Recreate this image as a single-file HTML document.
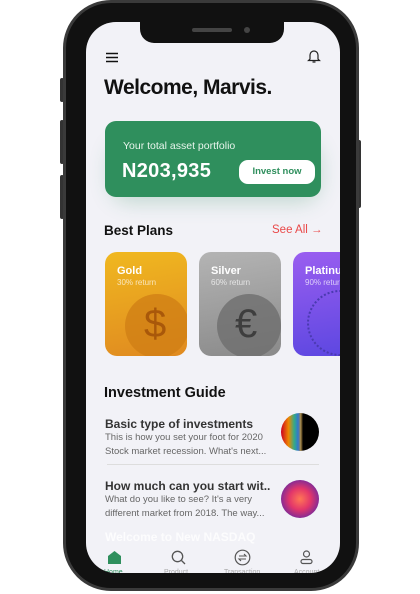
<!DOCTYPE html>
<html><head><style>
*{margin:0;padding:0;box-sizing:border-box}
body{width:420px;height:594px;background:#fff;position:relative;overflow:hidden;font-family:"Liberation Sans",sans-serif}
.a{position:absolute}
.frame{left:63px;top:0;width:296px;height:591px;border-radius:48px;background:#111;border:3px solid #3a3a3a}
.btn{background:#333;border-radius:2px}
.screen{left:86px;top:22px;width:254px;height:551px;border-radius:30px;background:#f2f2f7;overflow:hidden}
.notch{left:140px;top:18px;width:144px;height:25px;background:#111;border-radius:0 0 14px 14px}
.card{border-radius:12px;overflow:hidden}
.t{color:#fff;font-weight:bold;font-size:11px}
.s{color:rgba(255,255,255,.7);font-size:8px}
.h{font-weight:bold;font-size:12px;color:#333;white-space:nowrap}
.d{font-size:9.5px;color:#666;line-height:14px;white-space:nowrap}
.lab{font-size:7px;color:#aaa}
</style></head><body>
<div class="a btn" style="left:60px;top:78px;width:4px;height:24px"></div>
<div class="a btn" style="left:60px;top:120px;width:4px;height:44px"></div>
<div class="a btn" style="left:60px;top:175px;width:4px;height:44px"></div>
<div class="a btn" style="left:357px;top:140px;width:4px;height:68px"></div>
<div class="a frame"></div>
<div class="a screen">
 <svg class="a" style="left:20px;top:30px" width="13" height="11"><path d="M0 1.5H12M0 5.5H12M0 9.5H12" stroke="#111" stroke-width="1.5"/></svg>
 <svg class="a" style="left:221px;top:27px" width="14" height="15"><path d="M3 10V6a4 4 0 0 1 8 0v4l1.5 1.5h-11z M5.5 13h3" fill="none" stroke="#222" stroke-width="1.2"/></svg>
 <div class="a" style="left:18px;top:54px;font-size:21px;font-weight:bold;color:#111;letter-spacing:-.5px">Welcome, Marvis.</div>
 <div class="a" style="left:24px;top:108px;width:210px;height:60px;border-radius:20px;box-shadow:0 12px 20px rgba(46,140,90,.25)"></div>
 <div class="a" style="left:19px;top:99px;width:216px;height:76px;border-radius:11px;background:#2f8f5d"></div>
 <div class="a" style="left:37px;top:118px;font-size:10.5px;color:#e8f5ec">Your total asset portfolio</div>
 <div class="a" style="left:36px;top:138px;font-size:20px;color:#fff;font-weight:bold;letter-spacing:.3px">N203,935</div>
 <div class="a" style="left:153px;top:138px;width:76px;height:24px;border-radius:9px;background:#fff;color:#2f8f5d;font-size:9.5px;font-weight:bold;text-align:center;line-height:24px">Invest now</div>
 <div class="a" style="left:18px;top:201px;font-size:13.5px;font-weight:bold;color:#111">Best Plans</div>
 <div class="a" style="left:186px;top:202px;font-size:11.5px;color:#e94848">See All →</div>
 <div class="a card" style="left:19px;top:230px;width:82px;height:104px;background:linear-gradient(170deg,#f0b820,#e08a20)">
  <div class="a" style="left:20px;top:42px;width:64px;height:64px;border-radius:50%;background:#cf7d14;opacity:.75"></div>
  <div class="a" style="left:39px;top:50px;font-size:40px;color:#a9580a">$</div>
  <div class="a t" style="left:12px;top:13px">Gold</div><div class="a s" style="left:12px;top:26px">30% return</div>
 </div>
 <div class="a card" style="left:113px;top:230px;width:82px;height:104px;background:linear-gradient(170deg,#b4b4b4,#8a8a8a)">
  <div class="a" style="left:18px;top:42px;width:64px;height:64px;border-radius:50%;background:#6e6e6e;opacity:.8"></div>
  <div class="a" style="left:36px;top:50px;font-size:40px;color:#3e3e3e">€</div>
  <div class="a t" style="left:12px;top:13px">Silver</div><div class="a s" style="left:12px;top:26px">60% return</div>
 </div>
 <div class="a card" style="left:207px;top:230px;width:82px;height:104px;background:linear-gradient(170deg,#9a5ef0,#5a46e0)">
  <div class="a" style="left:14px;top:38px;width:66px;height:66px;border-radius:50%;border:2px dotted #4a3ab0"></div>
  <div class="a t" style="left:12px;top:13px">Platinum</div><div class="a s" style="left:12px;top:26px">90% return</div>
 </div>
 <div class="a" style="left:18px;top:363px;font-size:14.5px;font-weight:bold;color:#111">Investment Guide</div>
 <div class="a h" style="left:19px;top:395px">Basic type of investments</div>
 <div class="a d" style="left:19px;top:409px">This is how you set your foot for 2020<br>Stock market recession. What's next...</div>
 <div class="a" style="left:195px;top:391px;width:38px;height:38px;border-radius:50%;background:linear-gradient(90deg,#c02 0%,#e80 20%,#3a8 35%,#37c 45%,#a84 52%,#000 58%,#000)"></div>
 <div class="a" style="left:21px;top:442px;width:212px;height:1px;background:#ddd"></div>
 <div class="a h" style="left:19px;top:457px">How much can you start wit..</div>
 <div class="a d" style="left:19px;top:471px">What do you like to see? It's a very<br>different market from 2018. The way...</div>
 <div class="a" style="left:195px;top:458px;width:38px;height:38px;border-radius:50%;background:radial-gradient(circle at 50% 50%,#f75 0%,#e3366a 40%,#7a2a9a 75%,#3a4aa0)"></div>
 <div class="a" style="left:19px;top:508px;font-size:12px;font-weight:bold;color:#fff;opacity:.8">Welcome to New NASDAQ</div>
 <svg class="a" style="left:21px;top:528px" width="15" height="15"><path d="M1 6L7.5 1 14 6V14H1Z" fill="#2f8f5d"/></svg>
 <svg class="a" style="left:85px;top:528px" width="15" height="15"><circle cx="6.5" cy="6.5" r="5.2" fill="none" stroke="#555" stroke-width="1.3"/><path d="M10.5 10.5L14 14" stroke="#555" stroke-width="1.3"/></svg>
 <svg class="a" style="left:148px;top:527px" width="17" height="17"><circle cx="8.5" cy="8.5" r="7.3" fill="none" stroke="#555" stroke-width="1.2"/><path d="M5 7H12L10 5M12 10H5L7 12" fill="none" stroke="#555" stroke-width="1.1"/></svg>
 <svg class="a" style="left:214px;top:528px" width="13" height="15"><circle cx="6.5" cy="4" r="3" fill="none" stroke="#555" stroke-width="1.2"/><rect x="1" y="9.5" width="11" height="4" rx="2" fill="none" stroke="#555" stroke-width="1.2"/></svg>
 <div class="a lab" style="left:18px;top:547px;color:#2f8f5d">Home</div>
 <div class="a lab" style="left:78px;top:547px">Product</div>
 <div class="a lab" style="left:138px;top:547px">Transaction</div>
 <div class="a lab" style="left:208px;top:547px">Account</div>
</div>
<div class="a notch"></div>
<div class="a" style="left:192px;top:28px;width:40px;height:4px;border-radius:2px;background:#444"></div>
<div class="a" style="left:244px;top:27px;width:6px;height:6px;border-radius:50%;background:#444"></div>
</body></html>
